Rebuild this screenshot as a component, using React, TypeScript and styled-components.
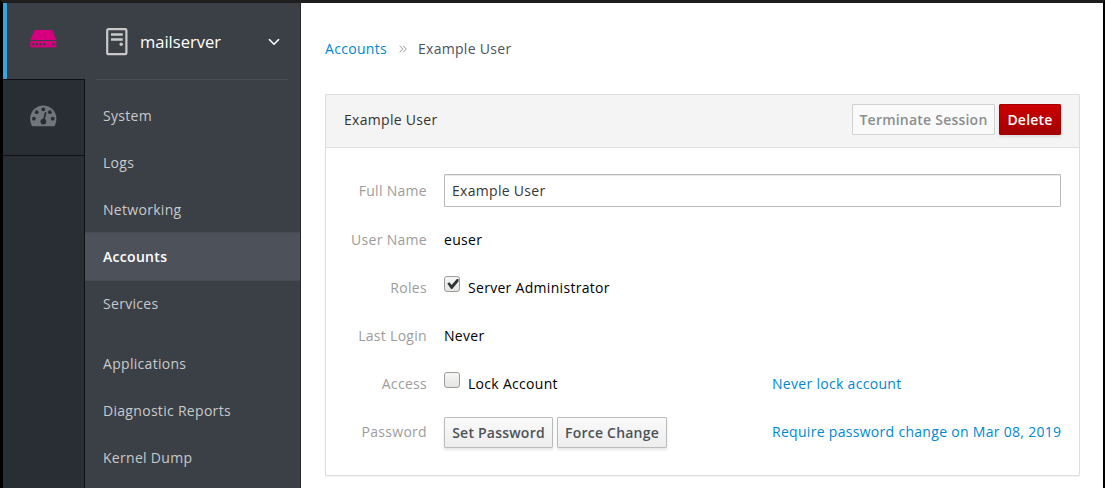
import React from 'react';
import styled, { createGlobalStyle, css } from 'styled-components';

const GlobalStyle = createGlobalStyle`
  * { box-sizing: border-box; }
  body {
    margin: 0;
    background: #fff;
    font-family: "Open Sans", "Noto Sans", sans-serif;
    font-size: 14px;
    letter-spacing: 0.3px;
    color: #000;
    overflow: hidden;
  }
`;

const Window = styled.div`
  display: flex;
  height: 488px;
  width: 1105px;
  border: solid #000;
  border-width: 3px 2px 0 3px;
  border-top-color: #1f1d1e;
  background: #fff;
`;

const Rail = styled.nav`
  width: 82px;
  flex: none;
  background: #292e34;
  box-shadow: inset -1px 0 #0e1013;
`;

const RailTile = styled.div<{ $active?: boolean }>`
  display: flex;
  align-items: center;
  height: 76px;
  padding: 0 0 3px 27px;
  border-bottom: 1px solid #0e1013;
  ${(p) => p.$active && css`
    height: 77px;
    padding: 0 0 4px 23px;
    background: #3b3f46;
    box-shadow: inset 4px 0 #39a5dc;
    padding-left: 27px;
  `}
`;

const Sidebar = styled.aside`
  width: 216px;
  flex: none;
  background: #3b3f46;
  border-right: 1px solid #25282d;
`;

const HostPicker = styled.div`
  display: flex;
  align-items: center;
  height: 77px;
  margin: 0 12px 12px 11px;
  padding: 2px 8px 0 10px;
  border-bottom: 1px solid #4b5058;
  color: #fff;
`;

const HostName = styled.span`
  flex: 1;
  padding: 0 0 2px 12px;
  font-size: 16.5px;
  letter-spacing: 0;
`;

const NavItem = styled.div<{ $active?: boolean }>`
  height: 47px;
  padding-left: 18px;
  line-height: 47px;
  color: #c8cacc;
  ${(p) => p.$active && css`
    background: #4d5159;
    box-shadow: 0 -1px #474b53, 0 1px #474b53;
    color: #fff;
    font-weight: 600;
  `}
`;

const NavGroup = styled.div`
  & + & { margin-top: 13px; }
`;

const Content = styled.main`
  flex: 1;
  padding: 33px 23px 0 24px;
`;

const Breadcrumb = styled.div`
  display: flex;
  align-items: center;
  height: 24px;
  color: #4d5258;
`;

const Link = styled.a`
  color: #0088ce;
`;

const Card = styled.section`
  height: 382px;
  margin-top: 34px;
  border: 1px solid #ddd;
  border-radius: 1px;
  box-shadow: 0 1px 1px rgba(0, 0, 0, 0.05);
`;

const CardHeader = styled.header`
  display: flex;
  align-items: center;
  gap: 4px;
  height: 53px;
  padding: 0 18px 3px;
  border-bottom: 1px solid #ddd;
  background: #f4f4f4;
  color: #333;
`;

const CardTitle = styled.span`
  flex: 1;
`;

const Button = styled.button<{ $kind?: 'danger' | 'disabled'; $width: number }>`
  width: ${(p) => p.$width}px;
  height: 31px;
  padding: 0;
  border: 1px solid #bbb;
  border-radius: 1px;
  background: linear-gradient(#fafafa, #ededed);
  box-shadow: 0 2px 3px rgba(3, 3, 3, 0.1);
  color: #4d5258;
  font: 600 14px/29px "Open Sans", "Noto Sans", sans-serif;
  letter-spacing: 0.22px;
  white-space: nowrap;
  ${(p) => p.$kind === 'danger' && css`
    border-color: #a30000;
    background: linear-gradient(#c00, #a30000);
    color: #fff;
  `}
  ${(p) => p.$kind === 'disabled' && css`
    border-color: #d1d1d1;
    background: #fafafa;
    box-shadow: none;
    color: #8b8d8f;
  `}
`;

const Form = styled.div`
  padding: 18px 18px 0;
`;

const Row = styled.div`
  display: grid;
  grid-template-columns: 83px 328px 289px;
  align-items: center;
  height: 48px;
`;

const WideRow = styled(Row)`
  grid-template-columns: 83px 1fr;
  height: 49px;
`;

const ButtonRow = styled(Row)`
  height: 49px;
`;

const Label = styled.span`
  text-align: right;
  color: #9c9c9c;
`;

const Value = styled.div`
  display: flex;
  align-items: center;
  gap: 4px;
  padding-left: 17px;
`;

const ButtonValue = styled(Value)`
  padding-top: 2px;
`;

const RowLink = styled(Link)`
  padding-left: 17px;
  white-space: nowrap;
`;

const TextInput = styled.input`
  width: 100%;
  height: 33px;
  padding: 0 7px;
  border: 1px solid #bbb;
  border-radius: 1px;
  outline: none;
  box-shadow: inset 0 1px 1px rgba(3, 3, 3, 0.1);
  font: inherit;
  letter-spacing: inherit;
  color: #363636;
`;

const CheckBox = styled.span`
  display: flex;
  width: 16px;
  height: 16px;
  margin: 0 4px 7px 0;
  border: 1px solid #9c9c98;
  border-radius: 3px;
  background: linear-gradient(#f6f6f5, #e4e4e2);
`;

const ServerIcon = () => (
  <svg width="27" height="18" viewBox="0 0 27 18">
    <path d="M4.7 0h17.6L26.3 10H.3z" fill="#d6007f" />
    <path d="M.3 11h26v6.400H.3z" fill="#d6007f" />
    <g fill="#3b3f46">
      {[2.4, 6, 9.600, 13.200, 22.400].map((x) => (
        <rect key={x} x={x} y="13.100" width="2.100" height="2.300" rx=".4" />
      ))}
    </g>
  </svg>
);

const GaugeIcon = () => (
  <svg width="27" height="22" viewBox="0 0 27 22">
    <path d="M2 21.200C1 19 .2 16.500 .2 13.500a13.100 13.100 0 0 1 26.200 0c0 3-.8 5.500-1.800 7.700z" fill="#72767b" />
    <g fill="#292e34">
      <circle cx="3.900" cy="13.700" r="1.900" />
      <circle cx="6.700" cy="7.200" r="1.900" />
      <circle cx="13.300" cy="4.300" r="1.900" />
      <circle cx="19.900" cy="7.200" r="1.900" />
      <circle cx="22.700" cy="13.700" r="1.900" />
      <circle cx="13.400" cy="16.600" r="2.900" />
    </g>
    <path d="M13.600 16l2-8.200" stroke="#292e34" strokeWidth="1.700" strokeLinecap="round" />
  </svg>
);

const HostIcon = () => (
  <svg width="22" height="28" viewBox="0 0 22 28" fill="none" stroke="#c9c9c9">
    <rect x="1.200" y="1.200" width="19.200" height="25" rx="1.200" strokeWidth="2.200" />
    <path d="M5 6.500h11.800M5 11.500h11.800" strokeWidth="2.300" />
    <circle cx="15.200" cy="16.300" r="1.700" fill="#c9c9c9" stroke="none" />
  </svg>
);

const CheckMark = () => (
  <svg width="14" height="14" viewBox="0 0 14 14">
    <path d="M2.300 6.600l2-1.300 2.300 2.600 5.300-6 1.600.2v2.500l-6.300 7.400h-1.100z" fill="#2e3436" />
  </svg>
);

const Separator = styled.svg`
  margin: 2px 11px 0 12px;
`;

export default function App() {
  return (
    <>
      <GlobalStyle />
      <Window>
        <Rail>
          <RailTile $active><ServerIcon /></RailTile>
          <RailTile><GaugeIcon /></RailTile>
        </Rail>
        <Sidebar>
          <HostPicker>
            <HostIcon />
            <HostName>mailserver</HostName>
            <svg width="12" height="8" viewBox="0 0 12 8" fill="none" stroke="#fff" strokeWidth="1.600">
              <path d="M1 1.200l5 5 5-5" />
            </svg>
          </HostPicker>
          <NavGroup>
            <NavItem>System</NavItem>
            <NavItem>Logs</NavItem>
            <NavItem>Networking</NavItem>
            <NavItem $active>Accounts</NavItem>
            <NavItem>Services</NavItem>
          </NavGroup>
          <NavGroup>
            <NavItem>Applications</NavItem>
            <NavItem>Diagnostic Reports</NavItem>
            <NavItem>Kernel Dump</NavItem>
          </NavGroup>
        </Sidebar>
        <Content>
          <Breadcrumb>
            <Link>Accounts</Link>
            <Separator width="8" height="8" viewBox="0 0 8 8" fill="none" stroke="#9c9c9c">
              <path d="M.6.600L3.800 4 .6 7.400M4.100.600L7.300 4 4.100 7.400" />
            </Separator>
            <span>Example User</span>
          </Breadcrumb>
          <Card>
            <CardHeader>
              <CardTitle>Example User</CardTitle>
              <Button $kind="disabled" $width={143}>Terminate Session</Button>
              <Button $kind="danger" $width={62}>Delete</Button>
            </CardHeader>
            <Form>
              <WideRow>
                <Label>Full Name</Label>
                <Value><TextInput defaultValue="Example User" /></Value>
              </WideRow>
              <Row>
                <Label>User Name</Label>
                <Value>euser</Value>
              </Row>
              <Row>
                <Label>Roles</Label>
                <Value><CheckBox><CheckMark /></CheckBox>Server Administrator</Value>
              </Row>
              <Row>
                <Label>Last Login</Label>
                <Value>Never</Value>
              </Row>
              <Row>
                <Label>Access</Label>
                <Value><CheckBox />Lock Account</Value>
                <RowLink>Never lock account</RowLink>
              </Row>
              <ButtonRow>
                <Label>Password</Label>
                <ButtonValue>
                  <Button $width={109}>Set Password</Button>
                  <Button $width={110}>Force Change</Button>
                </ButtonValue>
                <RowLink>Require password change on Mar 08, 2019</RowLink>
              </ButtonRow>
            </Form>
          </Card>
        </Content>
      </Window>
    </>
  );
}
